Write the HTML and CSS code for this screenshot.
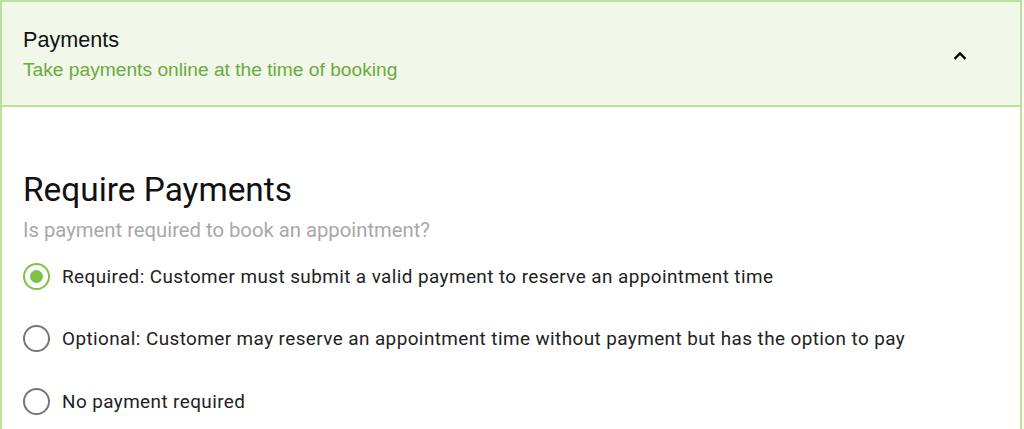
FILE: index.html
```html
<!DOCTYPE html>
<html>
<head>
<meta charset="utf-8">
<link rel="stylesheet" href="styles.css">
</head>
<body>
<div class="panel">
  <div class="panel-header">
    <div class="header-text">
      <div class="header-title">Payments</div>
      <div class="header-sub">Take payments online at the time of booking</div>
    </div>
    <svg class="chevron" width="24" height="24" viewBox="0 0 24 24"><path d="M12 8l-6 6 1.41 1.41L12 10.83l4.59 4.58L18 14z" fill="#000" stroke="#000" stroke-width="0.5"/></svg>
  </div>
  <div class="panel-body">
    <h2 class="section-title">Require Payments</h2>
    <div class="section-sub">Is payment required to book an appointment?</div>
    <div class="options">
      <label class="option">
        <span class="radio checked"><span class="dot"></span></span>
        <span class="option-label">Required: Customer must submit a valid payment to reserve an appointment time</span>
      </label>
      <label class="option">
        <span class="radio"></span>
        <span class="option-label">Optional: Customer may reserve an appointment time without payment but has the option to pay</span>
      </label>
      <label class="option">
        <span class="radio"></span>
        <span class="option-label">No payment required</span>
      </label>
    </div>
  </div>
</div>
</body>
</html>
```
FILE: styles.css
```css
html, body {
  margin: 0;
  padding: 0;
  background: #fff;
}
body {
  font-family: Roboto, "Liberation Sans", sans-serif;
}
.panel {
  width: 1022px;
  box-sizing: border-box;
  border: 2px solid #b9e19b;
  border-bottom: none;
  height: 429px;
}
.panel-header {
  display: flex;
  align-items: center;
  justify-content: space-between;
  background: #f1f7e9;
  border-bottom: 2px solid #b9e19b;
  height: 105px;
  box-sizing: border-box;
  padding: 0 48px 0 21px;
}
.header-text {
  font-family: "Liberation Sans", Arial, sans-serif;
  padding-top: 2px;
}
.header-title {
  font-size: 21.6px;
  color: #111;
  line-height: 30px;
}
.header-sub {
  font-size: 19.2px;
  color: #6aab3d;
  line-height: 30px;
}
.chevron {
  display: block;
  margin-top: 4px;
}
.panel-body {
  padding: 63px 21px 0;
}
.section-title {
  margin: 0;
  font-weight: 400;
  font-size: 33.4px;
  line-height: 40px;
  color: #111;
}
.section-sub {
  font-size: 20.25px;
  color: #a8a8a8;
  line-height: 28px;
  margin-top: 6px;
}
.options {
  display: flex;
  flex-direction: column;
  margin-top: 1px;
}
.option {
  display: flex;
  align-items: center;
  gap: 12px;
  height: 62.5px;
  font-size: 18.9px;
  letter-spacing: 0.42px;
  color: #222;
}
.radio {
  width: 27px;
  height: 27px;
  box-sizing: border-box;
  border: 2.7px solid #767676;
  border-radius: 50%;
  display: flex;
  align-items: center;
  justify-content: center;
  flex: none;
}
.radio.checked {
  border-color: #7dc243;
}
.dot {
  width: 13.5px;
  height: 13.5px;
  border-radius: 50%;
  background: #7dc243;
}
```
